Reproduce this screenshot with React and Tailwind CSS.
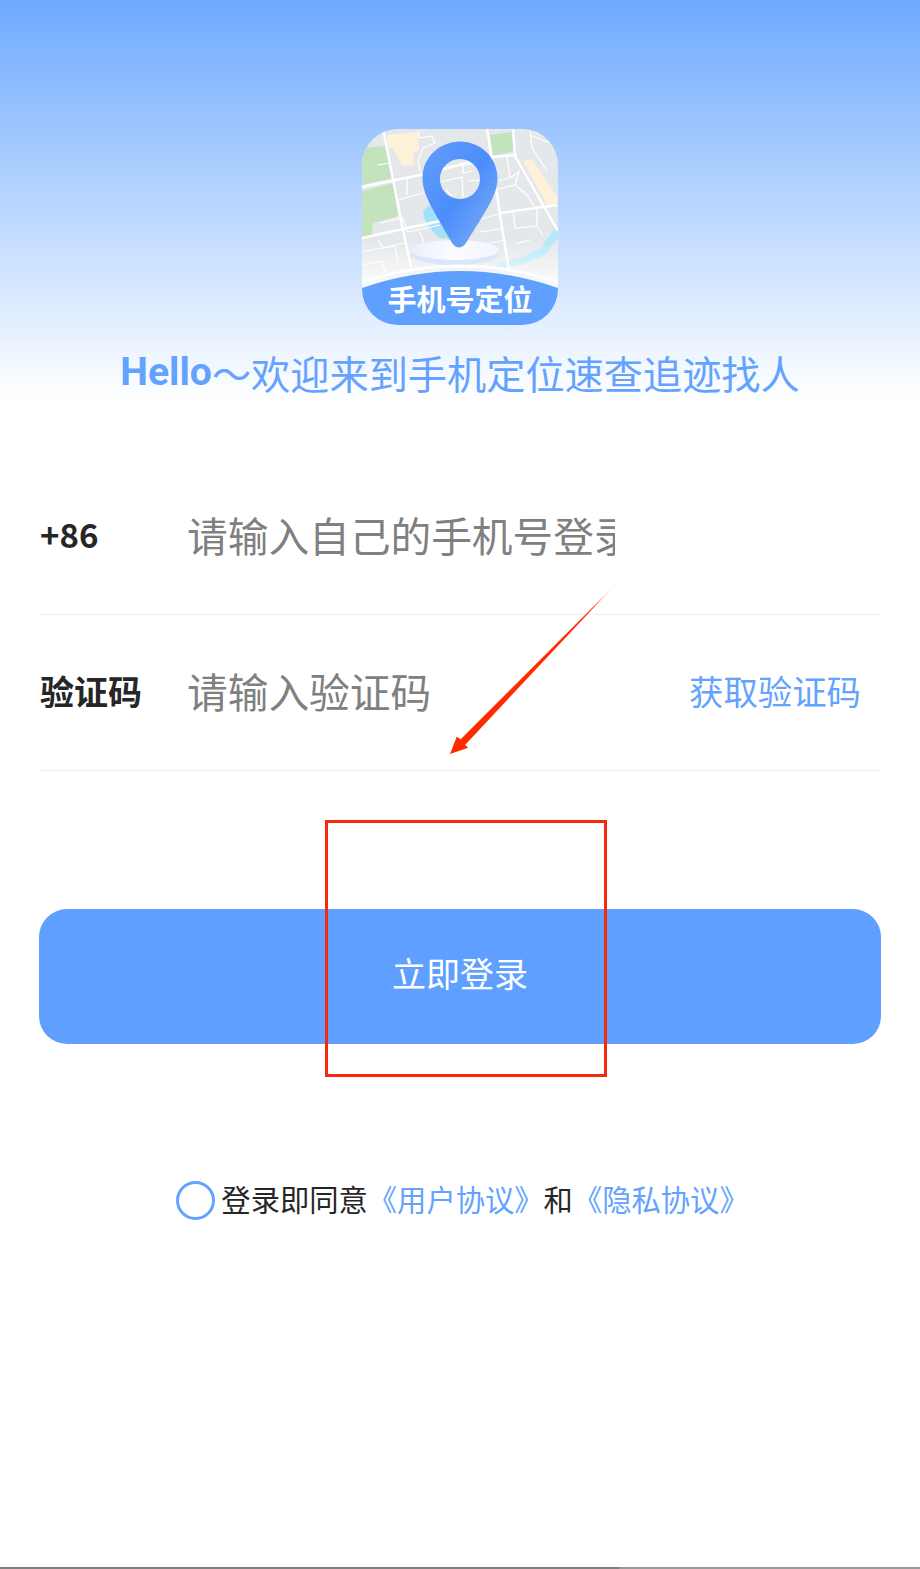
import React from 'react';

const CJK = { fontFamily: '"Noto Sans CJK SC", "Liberation Sans", sans-serif' };

// viewBox uses page pixels so the map can be traced straight off the screenshot
const AppLogo = () => (
  <svg viewBox="362 129 196 196" className="w-[196px] h-[196px] shrink-0">
    <defs>
      <clipPath id="logoClip">
        <rect x="362" y="129" width="196" height="196" rx="36" />
      </clipPath>
      <linearGradient id="pinFill" x1="0.1" y1="0.1" x2="0.9" y2="0.9">
        <stop offset="0" stopColor="#5f9bfb" />
        <stop offset="0.5" stopColor="#4b8dfb" />
        <stop offset="1" stopColor="#79aaf8" />
      </linearGradient>
      <linearGradient id="fadeBottom" x1="0" y1="0" x2="0" y2="1">
        <stop offset="0" stopColor="#ffffff" stopOpacity="0" />
        <stop offset="1" stopColor="#ffffff" stopOpacity="0.9" />
      </linearGradient>
      <linearGradient id="discTop" x1="0" y1="0" x2="1" y2="0">
        <stop offset="0" stopColor="#e9effc" />
        <stop offset="0.5" stopColor="#fbfcff" />
        <stop offset="1" stopColor="#f1f5fe" />
      </linearGradient>
      <filter id="soft"><feGaussianBlur stdDeviation="0.5" /></filter>
    </defs>
    <g clipPath="url(#logoClip)">
      <rect x="362" y="129" width="196" height="196" fill="#e5e8eb" />
      <path d="M362 148 L386 146 L392 178 L362 185 Z" fill="#c2e3bd" />
      <path d="M362 191 L393 183 L398 216 L373 223 L372 236 L362 238 Z" fill="#c2e3bd" />
      <path d="M490 135 L512 132 L513 151 L493 156 Z" fill="#c2e3bd" />
      <path d="M387 135 L418 132 L419 151 L413 152 L414 166 L402 166 L393 148 L388 148 Z" fill="#fdf1d9" />
      <path d="M523 161 L532 159 L558 198 V203 L547 205 Z" fill="#fdf1d9" />
      <path d="M532 130 L545 130 L552 140 L535 133 Z" fill="#fdf1d9" />
      <path d="M423 212 Q428 202 436 208 L450 238 L440 238 Q424 225 423 212 Z" fill="#a5e0fb" />
      <path d="M445 234 L452 238 L448 240 Z" fill="#c2e3bd" />
      <path d="M497 263 L523 257 L540 249 L555 228 L558 230 V238 L545 255 L523 264 L497 268 Z" fill="#b5e8fb" />
      <g stroke="#ffffff" fill="none" strokeWidth="2.4">
        <path d="M362 187 L420 175 L490 157 L517 155" />
        <path d="M383 129 L402 225 L411 267" />
        <path d="M487 128 L502 228 L509 270" />
        <path d="M513 128 L515 156 L558 231" />
        <path d="M362 238 L440 221 M500 213 L557 205" />
      </g>
      <g stroke="#ffffff" fill="none" strokeWidth="1.2">
        <path d="M377 165 L390 163" />
        <path d="M407 178 L407 195 M398 200 L423 193" />
        <path d="M418 131 L420 138 L432 136 L435 143 L423 148 L418 160 L420 171" />
        <path d="M380 223 L403 218 L408 232 L440 225" />
        <path d="M362 252 L405 243 M378 240 L383 248 L395 246 L398 262" />
        <path d="M362 265 L382 261 L385 272 M420 232 L424 242" />
        <path d="M507 156 L510 178 L498 181" />
        <path d="M515 185 L527 195 L535 208 M498 189 L515 185 L519 172 L510 178" />
        <path d="M530 129 L532 148 L547 171 M530 135 L550 143" />
        <path d="M477 220 L502 213 M480 232 L505 228 M475 246 L505 240" />
        <path d="M513 210 L515 228 L537 226 L537 208 M537 226 L543 236" />
        <path d="M515 244 L530 240" />
        <path d="M460 166 L478 163 M463 166 L463 173 L472 171 M468 181 L480 180" />
        <path d="M440 182 L462 177 L463 198 M446 190 L452 196" />
      </g>
      <rect x="362" y="240" width="196" height="50" fill="url(#fadeBottom)" />
      <ellipse cx="455" cy="254" rx="44" ry="11" fill="#dbe6fb" />
      <ellipse cx="455" cy="250" rx="44" ry="10" fill="url(#discTop)" />
      <path
        fillRule="evenodd"
        fill="url(#pinFill)"
        filter="url(#soft)"
        d="M460 141.5 C 439 141.5 422.5 158 422.5 178 C 422.5 195 433 209 452 243 Q 459 252 466 243 C 487 209 497.5 195 497.5 178 C 497.5 158 481 141.5 460 141.5 Z M460 159 A 20 20 0 1 1 459.9 159 Z"
      />
      <path d="M362 282 Q460 250 558 282" fill="none" stroke="#ffffff" strokeWidth="3" opacity="0.9" />
      <path d="M362 288 Q460 254 558 288 V325 H362 Z" fill="#5fa0ff" />
      <text
        x="460"
        y="311"
        textAnchor="middle"
        fill="#ffffff"
        fontWeight="700"
        fontSize="29"
        style={CJK}
      >
        手机号定位
      </text>
    </g>
  </svg>
);

const FormRow = ({ label, labelClass, placeholder, action }) => (
  <div className="flex items-center h-[156px] border-b border-[#eeeeee]">
    <div className={`w-[148px] shrink-0 pb-[4px] pl-[1px] font-bold text-[#262626] ${labelClass}`}>{label}</div>
    <div className="w-[428px] shrink-0 pb-[4px] overflow-hidden whitespace-nowrap text-[40.7px] text-[#808080]">
      {placeholder}
    </div>
    {action && (
      <div className="ml-auto pr-[20px] pb-[4px] whitespace-nowrap text-[34.4px] text-[#64a2ff]">{action}</div>
    )}
  </div>
);

const App = () => {
  return (
    <div className="relative w-[920px] h-[1569px] overflow-hidden bg-white" style={CJK}>
      <div className="h-[400px] pt-[129px] flex flex-col items-center bg-gradient-to-b from-[#6ea9ff] to-white">
        <AppLogo />
        <div className="mt-[20px] h-[55px] flex items-center whitespace-nowrap text-[39.2px] text-[#64a2ff]">
          <span className="font-bold" style={{ fontFamily: 'Roboto, sans-serif' }}>Hello</span>
          <span>～欢迎来到手机定位速查追迹找人</span>
        </div>
      </div>

      <div className="px-[39px] mt-[59px]">
        <FormRow
          label="+86"
          labelClass="text-[33px]"
          placeholder="请输入自己的手机号登录"
        />
        <FormRow
          label="验证码"
          labelClass="text-[34px]"
          placeholder="请输入验证码"
          action="获取验证码"
        />

        <button className="mt-[138px] w-full h-[135px] pb-[8px] rounded-[28px] bg-[#5e9fff] text-white text-[34px]">
          立即登录
        </button>

        <div className="mt-[137px] pl-[5px] flex items-center justify-center h-[39px] whitespace-nowrap text-[29.3px] text-[#262626]">
          <span className="w-[39px] h-[39px] mr-[6px] rounded-full border-[3px] border-[#64a2ff] shrink-0" />
          <span className="pb-[4px]">登录即同意</span>
          <span className="pb-[4px] text-[#64a2ff]">《用户协议》</span>
          <span className="pb-[4px]">和</span>
          <span className="pb-[4px] text-[#64a2ff]">《隐私协议》</span>
        </div>
      </div>

      {/* annotations pasted over the screenshot */}
      <div className="absolute left-[325px] top-[820px] w-[282px] h-[257px] border-[3px] border-[#f52a0c]" />
      <svg className="absolute left-0 top-0 pointer-events-none" width="920" height="800">
        <defs>
          <linearGradient id="arrowFade" gradientUnits="userSpaceOnUse" x1="614" y1="586" x2="592" y2="608">
            <stop offset="0" stopColor="#ff2a00" stopOpacity="0.1" />
            <stop offset="1" stopColor="#ff2a00" />
          </linearGradient>
        </defs>
        <polygon points="614,586 465,745 468.3,747.7 450,754 456.7,736.7 460.7,739.3" fill="url(#arrowFade)" />
      </svg>

      <div className="absolute left-0 right-0 bottom-0 h-[2px] flex">
        <div className="w-[619px] bg-[#808080]" />
        <div className="flex-1 bg-[#999999]" />
      </div>
    </div>
  );
};

export default App;
